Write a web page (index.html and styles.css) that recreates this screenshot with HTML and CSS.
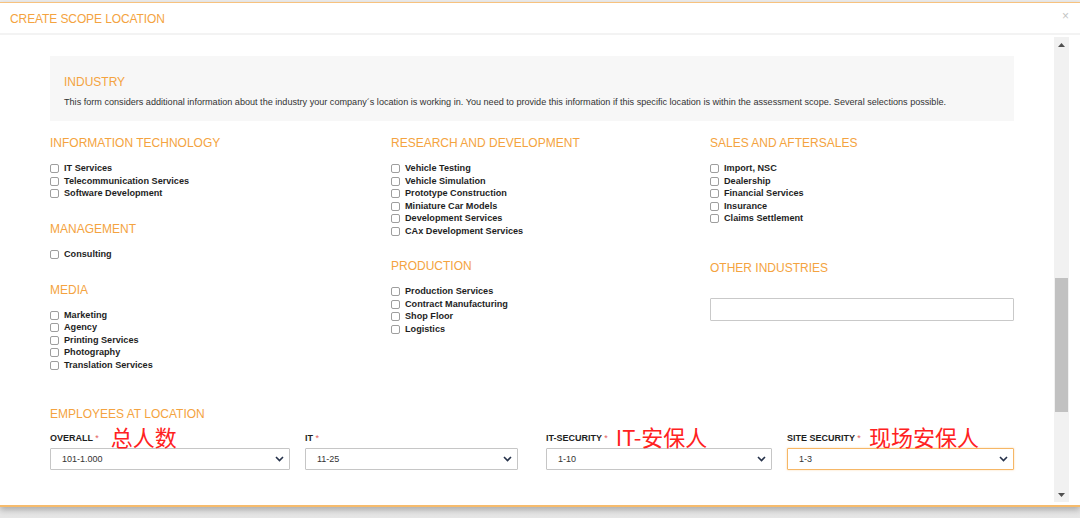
FILE: index.html
```html
<!DOCTYPE html>
<html lang="en">
<head>
<meta charset="utf-8">
<title>Create Scope Location</title>
<link rel="stylesheet" href="styles.css">
</head>
<body>
<div class="topstrip"></div>
<div class="modal">
  <div class="header">
    <span class="title">CREATE SCOPE LOCATION</span>
    <span class="close">×</span>
  </div>
  <div class="main">
    <div class="content">
      <div class="intro">
        <div class="intro-title">INDUSTRY</div>
        <div class="intro-text">This form considers additional information about the industry your company´s location is working in. You need to provide this information if this specific location is within the assessment scope. Several selections possible.</div>
      </div>

      <div class="columns">
        <div class="col">
          <div class="group">
            <div class="heading">INFORMATION TECHNOLOGY</div>
            <label class="item"><input type="checkbox">IT Services</label>
            <label class="item"><input type="checkbox">Telecommunication Services</label>
            <label class="item"><input type="checkbox">Software Development</label>
          </div>
          <div class="group">
            <div class="heading">MANAGEMENT</div>
            <label class="item"><input type="checkbox">Consulting</label>
          </div>
          <div class="group">
            <div class="heading">MEDIA</div>
            <label class="item"><input type="checkbox">Marketing</label>
            <label class="item"><input type="checkbox">Agency</label>
            <label class="item"><input type="checkbox">Printing Services</label>
            <label class="item"><input type="checkbox">Photography</label>
            <label class="item"><input type="checkbox">Translation Services</label>
          </div>
        </div>
        <div class="col">
          <div class="group">
            <div class="heading">RESEARCH AND DEVELOPMENT</div>
            <label class="item"><input type="checkbox">Vehicle Testing</label>
            <label class="item"><input type="checkbox">Vehicle Simulation</label>
            <label class="item"><input type="checkbox">Prototype Construction</label>
            <label class="item"><input type="checkbox">Miniature Car Models</label>
            <label class="item"><input type="checkbox">Development Services</label>
            <label class="item"><input type="checkbox">CAx Development Services</label>
          </div>
          <div class="group">
            <div class="heading">PRODUCTION</div>
            <label class="item"><input type="checkbox">Production Services</label>
            <label class="item"><input type="checkbox">Contract Manufacturing</label>
            <label class="item"><input type="checkbox">Shop Floor</label>
            <label class="item"><input type="checkbox">Logistics</label>
          </div>
        </div>
        <div class="col">
          <div class="group">
            <div class="heading">SALES AND AFTERSALES</div>
            <label class="item"><input type="checkbox">Import, NSC</label>
            <label class="item"><input type="checkbox">Dealership</label>
            <label class="item"><input type="checkbox">Financial Services</label>
            <label class="item"><input type="checkbox">Insurance</label>
            <label class="item"><input type="checkbox">Claims Settlement</label>
          </div>
          <div class="group group-other">
            <div class="heading">OTHER INDUSTRIES</div>
            <input class="text-input" type="text">
          </div>
        </div>
      </div>

      <div class="employees">
        <div class="heading">EMPLOYEES AT LOCATION</div>
        <div class="fields">
          <div class="field">
            <div class="label-row"><span class="label">OVERALL <span class="req">*</span></span><span class="note note-1">总人数</span></div>
            <div class="select w1"><span>101-1.000</span><svg class="chev" width="9" height="6" viewBox="0 0 9 6"><path d="M1 1 L4.5 4.5 L8 1" fill="none" stroke="#26324a" stroke-width="1.6"/></svg></div>
          </div>
          <div class="field">
            <div class="label-row"><span class="label">IT <span class="req">*</span></span></div>
            <div class="select w2"><span>11-25</span><svg class="chev" width="9" height="6" viewBox="0 0 9 6"><path d="M1 1 L4.5 4.5 L8 1" fill="none" stroke="#26324a" stroke-width="1.6"/></svg></div>
          </div>
          <div class="field">
            <div class="label-row"><span class="label">IT-SECURITY <span class="req">*</span></span><span class="note note-3">IT-安保人</span></div>
            <div class="select w3"><span>1-10</span><svg class="chev" width="9" height="6" viewBox="0 0 9 6"><path d="M1 1 L4.5 4.5 L8 1" fill="none" stroke="#26324a" stroke-width="1.6"/></svg></div>
          </div>
          <div class="field">
            <div class="label-row"><span class="label">SITE SECURITY <span class="req">*</span></span><span class="note note-4">现场安保人</span></div>
            <div class="select w4 focused"><span>1-3</span><svg class="chev" width="9" height="6" viewBox="0 0 9 6"><path d="M1 1 L4.5 4.5 L8 1" fill="none" stroke="#26324a" stroke-width="1.6"/></svg></div>
          </div>
        </div>
      </div>
    </div>

    <div class="scrollbar">
      <div class="sb-btn"><svg width="7" height="4" viewBox="0 0 7 4"><path d="M0 4 L3.5 0 L7 4 Z" fill="#505050"/></svg></div>
      <div class="sb-gap"></div>
      <div class="sb-thumb"></div>
      <div class="sb-rest"></div>
      <div class="sb-btn"><svg width="7" height="4" viewBox="0 0 7 4"><path d="M0 0 L3.5 4 L7 0 Z" fill="#505050"/></svg></div>
    </div>
  </div>
</div>
</body>
</html>
```

FILE: styles.css
```css
* { box-sizing: border-box; }

html, body {
  margin: 0;
  padding: 0;
}

body {
  width: 1080px;
  height: 518px;
  overflow: hidden;
  background: linear-gradient(#cfcfcf, #e6e6e6);
  font-family: "Liberation Sans", Arial, Helvetica, sans-serif;
  color: #222;
}

.topstrip {
  height: 2px;
  background: #ececec;
}

.modal {
  height: 505px;
  background: #fff;
  border-top: 1px solid #f7c27f;
  border-bottom: 2px solid #f6bb6c;
  box-shadow: 0 3px 6px rgba(0, 0, 0, 0.25);
  display: flex;
  flex-direction: column;
}

.header {
  height: 32px;
  flex: none;
  border-bottom: 2px solid #f3f3f3;
  display: flex;
  align-items: center;
  justify-content: space-between;
  padding: 0 11px 0 10px;
}

.title {
  color: #f4a340;
  font-size: 12px;
  letter-spacing: -0.1px;
  margin-top: 1px;
}

.close {
  color: #c4c4c4;
  font-size: 12px;
  margin-top: -4px;
}

.main {
  flex: 1;
  display: flex;
  overflow: hidden;
  padding-right: 11px;
}

.content {
  flex: 1;
  overflow: hidden;
  padding: 21px 40px 0 50px;
}

.intro {
  background: #f7f7f7;
  padding: 18px 14px 13px;
  height: 65px;
}

.intro-title {
  color: #f4a340;
  font-size: 12px;
  line-height: 16px;
}

.intro-text {
  margin-top: 6px;
  font-size: 9.1px;
  line-height: 12px;
  color: #333;
  white-space: nowrap;
}

.columns {
  margin-top: 14px;
  display: grid;
  grid-template-columns: 341px 319px 304px;
}

.heading {
  color: #f4a340;
  font-size: 12px;
  line-height: 16px;
  margin-bottom: 10.75px;
}

.group + .group {
  margin-top: 21.5px;
}

.group-other {
  margin-top: 35.75px !important;
}

.group-other .heading {
  margin-bottom: 22px;
}

.item {
  display: flex;
  align-items: center;
  height: 12.5px;
  font-size: 9.15px;
  font-weight: bold;
  color: #1e1e1e;
}

.item input {
  appearance: none;
  -webkit-appearance: none;
  width: 9px;
  height: 9px;
  margin: 1px 5px 0 0;
  border: 1px solid #9e9e9e;
  border-radius: 2px;
  background: #fff;
  flex: none;
}

.text-input {
  display: block;
  width: 304px;
  height: 23px;
  border: 1px solid #c9c9c9;
  border-radius: 1px;
  background: #fff;
  outline: none;
  padding: 0 8px;
}

.employees {
  margin-top: 35px;
}

.employees .heading {
  margin-bottom: 0;
}

.fields {
  display: grid;
  grid-template-columns: 255px 241px 241px 227px;
}

.label-row {
  height: 26px;
  display: flex;
  align-items: flex-end;
}

.label {
  font-size: 9px;
  font-weight: bold;
  line-height: 12px;
  margin-bottom: 4px;
  color: #1e1e1e;
  white-space: nowrap;
}

.req {
  color: #e4615c;
  font-weight: normal;
  font-size: 9px;
}

.note {
  font-family: "Noto Sans CJK SC", "Noto Sans", sans-serif;
  color: #ff2121;
  font-size: 22px;
  line-height: 22px;
  margin-bottom: 1px;
  white-space: nowrap;
}

.note-1 { margin-left: 12px; }
.note-3 { margin-left: 8px; }
.note-4 { margin-left: 8px; }

.select {
  height: 22px;
  border: 1px solid #c6c6c6;
  border-radius: 1px;
  display: flex;
  align-items: center;
  justify-content: space-between;
  padding: 0 5px 0 11px;
  font-size: 9px;
  color: #333;
  background: #fff;
}

.select.focused {
  border-color: #f6b766;
  box-shadow: 0 0 2px rgba(246, 183, 102, 0.6);
}

.w1 { width: 240px; }
.w2 { width: 213px; }
.w3 { width: 226px; }
.w4 { width: 227px; }

.chev { display: block; }

.scrollbar {
  width: 15px;
  flex: none;
  margin: 2px 0 3px;
  background: #f1f1f1;
  display: flex;
  flex-direction: column;
}

.sb-btn {
  height: 15px;
  flex: none;
  display: flex;
  align-items: center;
  justify-content: center;
}

.sb-gap {
  height: 226px;
  flex: none;
}

.sb-thumb {
  height: 134px;
  flex: none;
  margin: 0 1px;
  background: #c1c1c1;
}

.sb-rest {
  flex: 1;
}
```
